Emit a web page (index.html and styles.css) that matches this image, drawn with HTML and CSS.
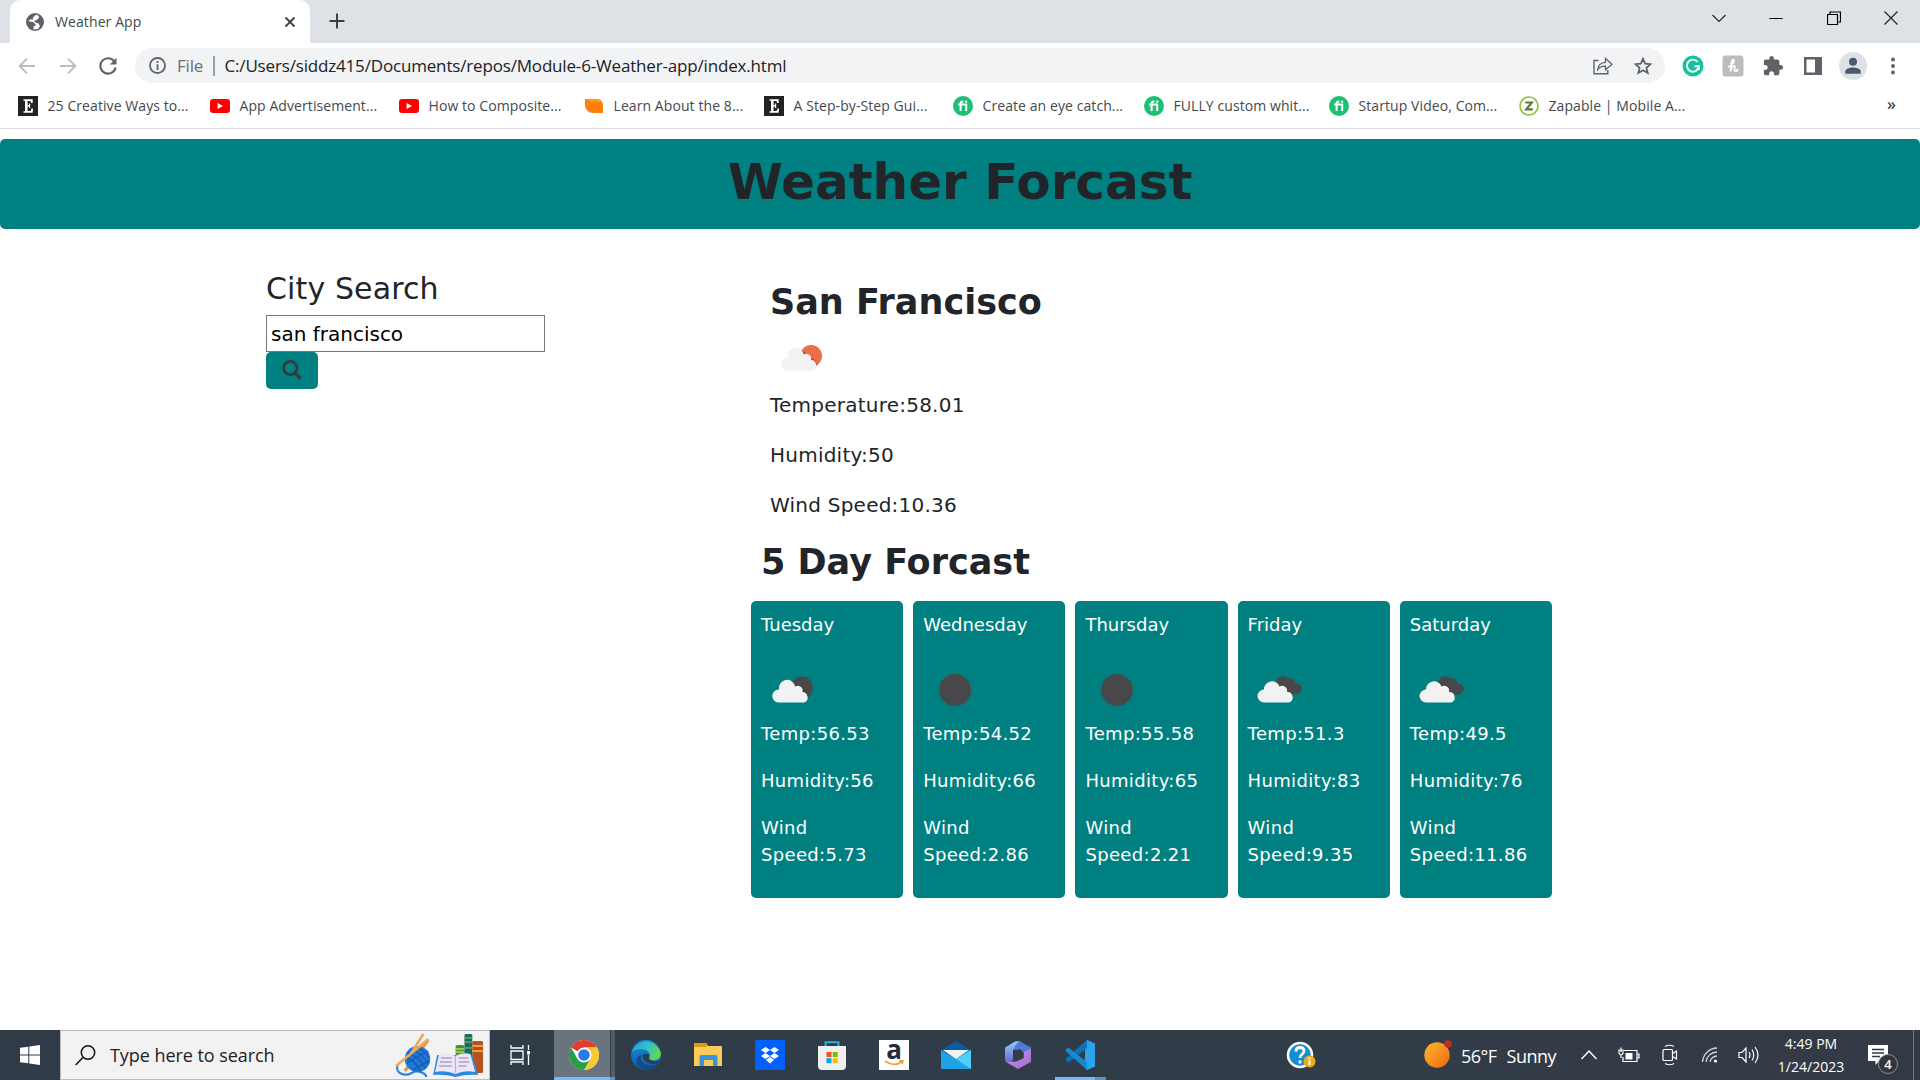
FILE: index.html
```html
<!DOCTYPE html>
<html lang="en">
<head>
<meta charset="utf-8">
<title>Weather App</title>
<link rel="stylesheet" href="styles.css">
</head>
<body>
<svg width="0" height="0" class="defs" aria-hidden="true">
  <defs>
    <linearGradient id="sunGrad" x1="0" y1="0" x2="1" y2="1"><stop offset="0" stop-color="#f9b934"/><stop offset="1" stop-color="#f4660c"/></linearGradient>
    <linearGradient id="edgeA" x1="0" y1="0" x2="1" y2="0.4"><stop offset="0" stop-color="#2a9fe0"/><stop offset="0.6" stop-color="#35c4c4"/><stop offset="1" stop-color="#62d84f"/></linearGradient>
    <linearGradient id="edgeB" x1="0" y1="0" x2="0" y2="1"><stop offset="0" stop-color="#1b8fdc"/><stop offset="1" stop-color="#0c57a6"/></linearGradient>
    <linearGradient id="m365a" x1="0" y1="0" x2="0" y2="1"><stop offset="0" stop-color="#8fd0f5"/><stop offset="1" stop-color="#6a5ad0"/></linearGradient>
    <linearGradient id="m365b" x1="0" y1="0" x2="1" y2="1"><stop offset="0" stop-color="#c69af0"/><stop offset="1" stop-color="#a068d0"/></linearGradient>
    <symbol id="ic-e" viewBox="0 0 20 20"><rect width="20" height="20" fill="#222"/><path d="M5.500 3.200H14.700V7H13.200L12.400 5H9.600V9.100H11V7.600H12.200V12.100H11V10.600H9.600V15H12.600L13.600 12.600H15L14.700 16.800H5.500V15.300H7V4.700H5.500Z" fill="#fff"/></symbol>
    <symbol id="ic-yt" viewBox="0 0 20 20"><rect y="3" width="20" height="14" rx="3" fill="#f00"/><path d="M7.600 7V13L13 10Z" fill="#fff"/></symbol>
    <symbol id="ic-leaf" viewBox="0 0 20 20"><path d="M1 3H12C17 3 19 6 19 10V17H9C4 17 1 13 1 9Z" fill="#ff7f0a"/><path d="M1 3H12C15 3 17 4 18 6L8 6Z" fill="#ff9a1c"/></symbol>
    <symbol id="ic-fi" viewBox="0 0 20 20"><circle cx="10" cy="10" r="10" fill="#1dbf73"/><path d="M7.600 15V7.400Q7.600 5.300 10.300 5.400M5.300 8.600H13.200V15" fill="none" stroke="#fff" stroke-width="2"/><circle cx="13.200" cy="5.600" r="1.200" fill="#fff"/></symbol>
    <symbol id="ic-z" viewBox="0 0 20 20"><circle cx="10" cy="10" r="9" fill="#fff" stroke="#8dc63f" stroke-width="1.700"/><path d="M6.200 6.500H12.800L7.200 13.400H13.800" fill="none" stroke="#5b7d3c" stroke-width="2.200"/></symbol>
    <symbol id="wx-sun" viewBox="0 0 62 62"><circle cx="41" cy="29" r="11" fill="#ec6e4c"/><path d="M31 24q6 0 7 6q7-1 9 8L30 42Z" fill="#d9492a"/><path d="M17 43.500A6.500 6.500 0 0 1 17.500 30.500A7.800 7.800 0 0 1 33.500 27.500A5 5 0 0 1 41 33A5.400 5.400 0 0 1 42.500 43.500Z" fill="#f2f2f2"/></symbol>
    <symbol id="wx-moon" viewBox="0 0 62 62"><circle cx="41" cy="28.500" r="11" fill="#48484a"/><path d="M32 25q6 0 7 6q7-1 9 7L30 42Z" fill="#2f3a3b"/><path d="M17.500 43.500A6.500 6.500 0 0 1 18 30.500A7.800 7.800 0 0 1 34 27.500A5 5 0 0 1 41.500 33A5.400 5.400 0 0 1 43 43.500Z" fill="#f2f2f2"/></symbol>
    <symbol id="wx-clear" viewBox="0 0 62 62"><circle cx="32" cy="31" r="16" fill="#48484a"/></symbol>
    <symbol id="wx-clouds" viewBox="0 0 62 62"><path d="M28 24A7 7 0 0 1 40 19.500A5.500 5.500 0 0 1 47.500 24.500A5.300 5.300 0 0 1 49 35.500H35Z" fill="#48484a"/><path d="M16 43.500A6.500 6.500 0 0 1 16 30.500A8 8 0 0 1 31.500 27.500A5 5 0 0 1 39 33A5.400 5.400 0 0 1 41 43.500Z" fill="#f2f2f2"/></symbol>
  </defs>
</svg>

<header class="tabstrip">
  <div class="tab">
    <svg class="globe" width="18" height="18" viewBox="0 0 18 18"><circle cx="9" cy="9" r="9" fill="#5f6368"/><path d="M10 1.800L7 4.500V6.500H4L2.200 8L7.500 9.300L9.500 11.200V12.500L7.500 13.600V16.500L12 16L14 13L12.500 10.500L9.500 9.500L8 8L10 7.200L12.500 5.500L13 3Z" fill="#fff"/></svg>
    <span class="tab-title">Weather App</span>
    <svg width="12" height="12" viewBox="0 0 12 12"><path d="M1.500 1.500L10.500 10.500M10.500 1.500L1.500 10.500" stroke="#3c4043" stroke-width="1.800"/></svg>
  </div>
  <svg class="plus" width="16" height="16" viewBox="0 0 16 16"><path d="M8 0.500V15.500M0.500 8H15.500" stroke="#3c4043" stroke-width="2"/></svg>
  <div class="window-buttons">
    <svg width="14" height="14" viewBox="0 0 14 14"><path d="M.5 4L7 10.500L13.500 4" fill="none" stroke="#222" stroke-width="1.100"/></svg>
    <svg width="14" height="14" viewBox="0 0 14 14"><path d="M.5 7.500H13.500" stroke="#000"/></svg>
    <svg width="14" height="14" viewBox="0 0 14 14"><path d="M.5 3.500H10.500V13.500H.5ZM3 3.500V1H13.500V11H10.500" fill="none" stroke="#000" stroke-width="1.200"/></svg>
    <svg width="14" height="14" viewBox="0 0 14 14"><path d="M.5 .5L13.500 13.500M13.500 .5L.5 13.500" stroke="#222" stroke-width="1.200"/></svg>
  </div>
</header>

<nav class="toolbar">
  <div class="nav-buttons">
    <svg width="18" height="18" viewBox="0 0 18 18"><path d="M17 9H2M9 1.700L1.700 9L9 16.300" fill="none" stroke="#babcbe" stroke-width="1.800"/></svg>
    <svg width="18" height="18" viewBox="0 0 18 18"><path d="M1 9H16M9 1.700L16.300 9L9 16.300" fill="none" stroke="#babcbe" stroke-width="1.800"/></svg>
    <svg width="18" height="18" viewBox="0 0 18 18"><path d="M15.600 4.800A7.700 7.700 0 1 0 16.600 10.500" fill="none" stroke="#5f6368" stroke-width="2.100"/><path d="M17.500 .8V7.500H10.800Z" fill="#5f6368"/></svg>
  </div>
  <div class="omnibox">
    <svg width="17" height="17" viewBox="0 0 17 17"><circle cx="8.500" cy="8.500" r="7.500" fill="none" stroke="#5f6368" stroke-width="1.800"/><path d="M8.500 7.300V13M8.500 4V5.900" stroke="#5f6368" stroke-width="1.800"/></svg>
    <span class="scheme">File</span>
    <span class="divider"></span>
    <span class="url">C:/Users/siddz415/Documents/repos/Module-6-Weather-app/index.html</span>
    <svg class="share" width="20" height="18" viewBox="0 0 20 18"><path d="M5.500 3.500H1V16.800H14.800V13" fill="none" stroke="#5f6368" stroke-width="1.400"/><path d="M4.800 12.500Q5.500 5.800 12.500 5.400V1.500L19 7.300L12.500 12.800V9.200Q7.500 9 4.800 12.500Z" fill="none" stroke="#5f6368" stroke-width="1.300"/></svg>
    <svg class="star" width="18" height="18" viewBox="0 0 18 18"><path d="M9 1.800L11.100 6.700L16.500 7.200L12.400 10.700L13.700 16L9 13.200L4.300 16L5.600 10.700L1.500 7.200L6.900 6.700Z" fill="none" stroke="#5f6368" stroke-width="1.800"/></svg>
  </div>
  <div class="extensions">
    <svg width="22" height="22" viewBox="0 0 22 22"><circle cx="11" cy="11" r="10.500" fill="#15c39a"/><path d="M15.600 6.900A6 6 0 1 0 16.900 11.200H12.500M16.800 11.300V15" fill="none" stroke="#fff" stroke-width="1.900"/></svg>
    <svg width="22" height="22" viewBox="0 0 22 22"><rect x=".5" y=".5" width="21" height="21" rx="3" fill="#bdbdbd"/><path d="M6 12C11 10 13 6 11.500 4.600C9.500 4 9 10 8.500 16.500C9 12 12 10 12.800 11.300C13 13 11.500 16 13.500 16.300C14.500 16.300 15.500 15 16 14" fill="none" stroke="#fff" stroke-width="1.800"/></svg>
    <svg width="22" height="22" viewBox="0 0 24 24"><path d="M20.500 11H19V7c0-1.100-.9-2-2-2h-4V3.500C13 2.120 11.880 1 10.500 1S8 2.120 8 3.500V5H4c-1.100 0-1.990.9-1.990 2v3.800H3.500c1.490 0 2.700 1.210 2.700 2.700s-1.210 2.700-2.700 2.700H2V20c0 1.100.9 2 2 2h3.800v-1.500c0-1.490 1.210-2.700 2.700-2.700 1.490 0 2.700 1.210 2.700 2.700V22H17c1.100 0 2-.9 2-2v-4h1.500c1.380 0 2.500-1.120 2.500-2.500S21.880 11 20.500 11z" fill="#5f6368"/></svg>
    <svg width="22" height="22" viewBox="0 0 22 22"><path d="M2 2H20V20H2ZM4.500 4.500V17.500H13V4.500Z" fill="#5f6368" fill-rule="evenodd"/></svg>
    <svg width="28" height="28" viewBox="0 0 28 28"><circle cx="14" cy="14" r="14" fill="#dee1e6"/><circle cx="14" cy="9.800" r="4" fill="#4a5970"/><path d="M6.300 21.700V19.500C6.300 16.700 11 15.500 14 15.500S21.700 16.700 21.700 19.500V21.700Z" fill="#4a5970"/></svg>
    <svg width="22" height="22" viewBox="0 0 22 22"><circle cx="11" cy="4.600" r="2" fill="#5f6368"/><circle cx="11" cy="11" r="2" fill="#5f6368"/><circle cx="11" cy="17.400" r="2" fill="#5f6368"/></svg>
  </div>
</nav>

<nav class="bookmarks">
  <a class="bookmark b1"><svg width="20" height="20"><use href="#ic-e"/></svg><span>25 Creative Ways to...</span></a>
  <a class="bookmark b2"><svg width="20" height="20"><use href="#ic-yt"/></svg><span>App Advertisement...</span></a>
  <a class="bookmark b3"><svg width="20" height="20"><use href="#ic-yt"/></svg><span>How to Composite...</span></a>
  <a class="bookmark b4"><svg width="20" height="20"><use href="#ic-leaf"/></svg><span>Learn About the 8...</span></a>
  <a class="bookmark b5"><svg width="20" height="20"><use href="#ic-e"/></svg><span>A Step-by-Step Gui...</span></a>
  <a class="bookmark b6"><svg width="20" height="20"><use href="#ic-fi"/></svg><span>Create an eye catch...</span></a>
  <a class="bookmark b7"><svg width="20" height="20"><use href="#ic-fi"/></svg><span>FULLY custom whit...</span></a>
  <a class="bookmark b8"><svg width="20" height="20"><use href="#ic-fi"/></svg><span>Startup Video, Com...</span></a>
  <a class="bookmark b9"><svg width="20" height="20"><use href="#ic-z"/></svg><span>Zapable | Mobile A...</span></a>
  <span class="more">»</span>
</nav>

<main class="page">
  <h1 class="banner">Weather Forcast</h1>
  <div class="content">
    <section class="search">
      <h2>City Search</h2>
      <input class="city" type="text" value="san francisco">
      <button class="go" type="button" aria-label="Search">
        <svg width="22" height="22" viewBox="0 0 22 22"><circle cx="9.300" cy="8" r="6.700" fill="none" stroke="#343a40" stroke-width="2.700"/><path d="M13.800 12.800L19.600 18.600" stroke="#343a40" stroke-width="3.200"/></svg>
      </button>
    </section>
    <section class="weather">
      <div class="today">
        <h2>San Francisco</h2>
        <svg class="wx" width="62" height="62"><use href="#wx-sun"/></svg>
        <p>Temperature:58.01</p>
        <p>Humidity:50</p>
        <p>Wind Speed:10.36</p>
      </div>
      <h2 class="five">5 Day Forcast</h2>
      <div class="cards">
        <article class="card"><h3>Tuesday</h3><svg class="wx" width="62" height="62"><use href="#wx-moon"/></svg><p>Temp:56.53</p><p>Humidity:56</p><p>Wind Speed:5.73</p></article>
        <article class="card"><h3>Wednesday</h3><svg class="wx" width="62" height="62"><use href="#wx-clear"/></svg><p>Temp:54.52</p><p>Humidity:66</p><p>Wind Speed:2.86</p></article>
        <article class="card"><h3>Thursday</h3><svg class="wx" width="62" height="62"><use href="#wx-clear"/></svg><p>Temp:55.58</p><p>Humidity:65</p><p>Wind Speed:2.21</p></article>
        <article class="card"><h3>Friday</h3><svg class="wx" width="62" height="62"><use href="#wx-clouds"/></svg><p>Temp:51.3</p><p>Humidity:83</p><p>Wind Speed:9.35</p></article>
        <article class="card"><h3>Saturday</h3><svg class="wx" width="62" height="62"><use href="#wx-clouds"/></svg><p>Temp:49.5</p><p>Humidity:76</p><p>Wind Speed:11.86</p></article>
      </div>
    </section>
  </div>
</main>

<footer class="taskbar">
  <div class="start"><svg width="20" height="20" viewBox="0 0 20 20"><path d="M0 2.800L8.300 1.700V9.500H0ZM9.300 1.500L20 0V9.500H9.300ZM0 10.500H8.300V18.300L0 17.200ZM9.300 10.500H20V20L9.300 18.500Z" fill="#fff"/></svg></div>
  <div class="searchbox">
    <svg width="21" height="21" viewBox="0 0 21 21"><circle cx="13" cy="7.500" r="6.700" fill="none" stroke="#111" stroke-width="1.500"/><path d="M8.200 12.300L.7 20" stroke="#111" stroke-width="1.500"/></svg>
    <span>Type here to search</span>
    <svg class="doodle" width="90" height="48" viewBox="0 0 92 48" preserveAspectRatio="none">
      <path d="M3 34C-1 42 10 46 17 42S32 43 32 46" fill="none" stroke="#2a86e0" stroke-width="2.200"/>
      <path d="M10 40L34 9" stroke="#e0954a" stroke-width="3"/>
      <circle cx="23" cy="28" r="13" fill="#1f78d8"/>
      <path d="M13 22Q24 25 31 37M16 18Q28 22 34 33M21 16Q30 19 35 27M11 27Q20 29 26 40M12 32L34 20M18 39L35 30" fill="none" stroke="#125ab0" stroke-width="1.300"/>
      <path d="M1 35L27 14L34 8M16 23L29 3" stroke="#eda85e" stroke-width="2.600"/>
      <rect x="62" y="14" width="9" height="19" rx="1.500" fill="#3f9444"/><path d="M62 18H71M62 21H71" stroke="#c8d14c" stroke-width="1.500"/>
      <rect x="71" y="3" width="8" height="31" rx="1.500" fill="#0a6f66"/><path d="M71 7H79M71 11H79M71 17H79" stroke="#c7b54b" stroke-width="1.200"/>
      <rect x="79" y="10" width="11" height="32" rx="1.500" fill="#b4531c"/><path d="M79 15H90M79 20H90" stroke="#e8a13c" stroke-width="1.800"/>
      <path d="M39 44L43 24H79L85 44Q73 43 62 46Q50 43 39 44Z" fill="#2c8be0"/>
      <path d="M41 41L45 23Q55 21 61.500 25Q69 21 77 23L82 41Q70 39 62 43Q52 39 41 41Z" fill="#ece6f8"/>
      <path d="M61.500 25L62 42" stroke="#b7a9d8" stroke-width="1.200"/><path d="M47 27H58M46 31H58M45 35H58M65 27H75M65 31H76M65 35H73" stroke="#aaa3c0" stroke-width="1.300"/>
    </svg>
  </div>
  <div class="taskview"><svg width="22" height="20" viewBox="0 0 22 20"><path d="M1 0V3H13V0M1 20V17H13V20M1 6H13V14.500H1ZM18.500 0V5M18.500 10V20" fill="none" stroke="#fff" stroke-width="1.300"/><rect x="17" y="6" width="3" height="3.500" fill="#fff"/></svg></div>
  <div class="apps">
    <div class="app active">
      <svg width="30" height="30" viewBox="0 0 30 30"><circle cx="15" cy="15" r="15" fill="#fff"/><path d="M15 15L2 7.500A15 15 0 0 1 28 7.500H15Z" fill="#e33b2e"/><path d="M28 7.500A15 15 0 0 1 15 30L21.500 18.800L15 7.500Z" fill="#fcc934"/><path d="M2 7.500A15 15 0 0 0 15 30L21.500 18.800H8.500Z" fill="#2a9c4a"/><circle cx="15" cy="15" r="7.500" fill="#fff"/><circle cx="15" cy="15" r="5.800" fill="#2b78e8"/></svg>
      <span class="edge-stack"></span>
    </div>
    <div class="app"><svg width="30" height="30" viewBox="0 0 30 30"><circle cx="15" cy="15" r="15" fill="url(#edgeB)"/><path d="M1 12A15 15 0 0 1 30 13.500C30 19 25 21 20.500 20C17 19 19 17.500 19 15C19 10 8 6 1 12Z" fill="url(#edgeA)"/><path d="M10 15C9 22 15 28 27 24C22 31 12 32 7 25C4 20 6 16 10 15Z" fill="#104b8c"/><path d="M12 14C10 21 18 25 27 23.500L28.500 21C24 22 19 21 17.500 18.500Q18.800 16.500 17 13.800Z" fill="#303d49"/></svg></div>
    <div class="app"><svg width="30" height="30" viewBox="0 0 30 30"><path d="M1 4Q1 3 2 3H13L15 6H28Q29 6 29 7V26H1Z" fill="#f8cc56"/><path d="M1 3H13L15 5L13 7H1Z" fill="#dc9a16"/><path d="M6.500 26V17Q6.500 15 8.500 15H22.500Q24.500 15 24.500 17V26H20V20H11V26Z" fill="#3d94d8"/></svg></div>
    <div class="app"><svg width="30" height="30" viewBox="0 0 30 30"><rect width="30" height="30" fill="#0061fe"/><path d="M10.500 7L15 10L10.500 13L6 10ZM19.500 7L24 10L19.500 13L15 10ZM10.500 13L15 16L10.500 19L6 16ZM19.500 13L24 16L19.500 19L15 16ZM15 17L19 20L15 23.500L11 20Z" fill="#fff"/></svg></div>
    <div class="app"><svg width="30" height="30" viewBox="0 0 30 30"><path d="M1 6H29V26Q29 30 25 30H5Q1 30 1 26Z" fill="#f0f0f0"/><path d="M8.500 6V2.200H21.500V6" fill="none" stroke="#2ab2ea" stroke-width="2"/><rect x="9.500" y="12" width="5" height="5" fill="#f25022"/><rect x="15.700" y="12" width="5" height="5" fill="#7fba00"/><rect x="9.500" y="18.200" width="5" height="5" fill="#00a4ef"/><rect x="15.700" y="18.200" width="5" height="5" fill="#ffb900"/></svg></div>
    <div class="app"><div class="amazon"><span>a</span><svg width="20" height="6" viewBox="0 0 20 6"><path d="M1 1Q10 7.500 18 1.500M15 .8H19L18 4" fill="none" stroke="#f3a13a" stroke-width="1.600"/></svg></div></div>
    <div class="app"><svg width="30" height="30" viewBox="0 0 30 30"><path d="M0 10L15 1L30 10V20H0Z" fill="#0c59a4"/><path d="M0 10L15 19L30 10V29H0Z" fill="#1fa2e6"/><path d="M15 19L30 10V29Z" fill="#4fd0f8"/><path d="M2 10H28L15 19Z" fill="#f3f3f3"/></svg></div>
    <div class="app"><svg width="30" height="30" viewBox="0 0 30 30"><path d="M12 1.500L2 7.500V21L8 24.500L10 19V10L20 3.500L16 1Z" fill="url(#m365a)"/><path d="M16 1L28 7.500V17L20 12.500L11 9.500L12 6Z" fill="#5178d8"/><path d="M28 9V22L15 29L3 22L13 21.500L20.500 18V12Z" fill="url(#m365b)"/><path d="M11 11L17 9L20.500 12.500V18L13 21.500L10 18.500Z" fill="#303d49"/></svg></div>
    <div class="app code"><svg width="30" height="30" viewBox="0 0 30 30"><path d="M22 0L30 3.500V26.500L22 30L20 28V2Z" fill="#2aa4ec"/><path d="M22 0V8L3.500 22.500L.5 20.500V19Z" fill="#0b72ba"/><path d="M22 30V22L3.500 7.500L.5 9.500V11Z" fill="#1488d2"/></svg><span class="running"></span></div>
  </div>
  <div class="tray">
    <svg class="help" width="30" height="34" viewBox="0 0 30 34"><circle cx="14" cy="17" r="12" fill="#128fd2" stroke="#fff" stroke-width="2.500"/><path d="M10 13.500Q10 9.500 14 9.500T18 13Q18 15 16 16.300T14 20" fill="none" stroke="#fff" stroke-width="2.800"/><circle cx="14" cy="24" r="1.700" fill="#fff"/><circle cx="23.500" cy="23.500" r="6" fill="#f0a81c"/><path d="M23.500 22.500V27M23.500 19.500V21.300" stroke="#fff" stroke-width="2"/></svg>
    <svg class="sun" width="30" height="34" viewBox="0 0 30 34"><circle cx="14" cy="17" r="12.700" fill="url(#sunGrad)"/><circle cx="25" cy="6" r="3.700" fill="#c42b1c"/></svg>
    <span class="weather-text"><span>56°F</span><span>Sunny</span></span>
    <svg class="chev" width="18" height="18" viewBox="0 0 18 18"><path d="M1.500 13L9 5L16.500 13" fill="none" stroke="#fff" stroke-width="1.400"/></svg>
    <svg class="bat" width="22" height="18" viewBox="0 0 22 18"><path d="M6 4.500H19V15.500H5V11M19 8H21V12H19M3 6V1.500M1 4V7Q1 8.500 3 8.500T5 7V4ZM3 8.500V12" fill="none" stroke="#fff" stroke-width="1.200"/><rect x="7.500" y="7" width="7" height="6.500" fill="#fff"/></svg>
    <svg class="cam" width="18" height="22" viewBox="0 0 18 22"><rect x="2" y="5.500" width="9.500" height="11" rx="1" fill="none" stroke="#fff" stroke-width="1.200"/><path d="M11.500 9.500L15.500 7V15L11.500 12.500M4 2.500Q8.500 0 13 2.500M4 19.500Q8.500 22 13 19.500" fill="none" stroke="#fff" stroke-width="1.200"/></svg>
    <svg class="wifi" width="18" height="18" viewBox="0 0 18 18"><path d="M1.500 16A15 15 0 0 1 16 2M5 16A11 11 0 0 1 16 6M9 16A7 7 0 0 1 16 10" fill="none" stroke="#d5d8dc" stroke-width="1.300"/><circle cx="14.500" cy="15" r="1.600" fill="#fff"/></svg>
    <svg class="vol" width="22" height="18" viewBox="0 0 22 18"><path d="M1 6.500H4L8 2V16L4 11.500H1ZM11 6Q13 9 11 12M14 3.500Q17.500 9 14 14.500M17 1Q23 9 17 17" fill="none" stroke="#fff" stroke-width="1.200"/></svg>
    <div class="clock"><span>4:49 PM</span><span>1/24/2023</span></div>
    <div class="notice"><svg width="20" height="20" viewBox="0 0 20 20"><path d="M0 0H20V16H11L7.500 20V16H0Z" fill="#fff"/><path d="M4 4.500H16M4 8H16M4 11.500H12" stroke="#303845" stroke-width="1.300"/></svg><span class="count">4</span></div>
    <span class="peek"></span>
  </div>
</footer>
</body>
</html>
```
FILE: styles.css
```css
* { box-sizing: border-box; }
html, body { margin: 0; height: 100%; }
body {
  display: flex; flex-direction: column; height: 1080px; overflow: hidden;
  background: #fff; color: #212529; font-family: "DejaVu Sans", Verdana, sans-serif;
}
svg { display: block; flex: none; }
.defs { position: absolute; }
.tabstrip, .toolbar, .bookmarks, .taskbar { font-family: "Open Sans", "Noto Sans", sans-serif; white-space: nowrap; }

/* Browser chrome */
.tabstrip { display: flex; align-items: center; height: 43px; flex: none; padding-left: 10px; background: #dee1e6; }
.tab { display: flex; align-items: center; width: 300px; height: 43px; padding: 0 14px 0 16px; background: #fff; border-radius: 10px 10px 0 0; }
.tab-title { flex: 1; margin-left: 11px; padding-bottom: 1px; font-size: 14px; letter-spacing: .1px; color: #45494d; }
.plus { margin-left: 19px; margin-bottom: 1px; }
.window-buttons { display: flex; gap: 43.5px; margin-left: auto; padding-right: 22px; margin-bottom: 7px; }

.toolbar { display: flex; align-items: center; height: 45px; flex: none; padding-left: 18px; }
.nav-buttons { display: flex; gap: 22.5px; width: 117px; }
.omnibox { display: flex; align-items: center; width: 1530px; height: 35px; padding: 0 13px 0 14px; background: #f1f3f4; border-radius: 18px; font-size: 17px; letter-spacing: -.17px; }
.scheme { width: 35px; margin-left: 11px; color: #6b6f74; }
.divider { width: 1.5px; height: 20px; margin-left: 1px; background: #9aa0a6; }
.url { margin-left: 10px; color: #202124; }
.share { margin-left: auto; margin-right: 21px; }
.extensions { display: flex; align-items: center; gap: 18px; margin-left: 17px; }
.extensions svg:nth-child(5) { margin: 0 -3px; }

.bookmarks { display: flex; align-items: center; height: 41px; flex: none; padding: 0 24px 5px 18px; border-bottom: 1px solid #d9dadc; font-size: 14px; letter-spacing: .08px; color: #45494d; }
.bookmark { display: flex; align-items: center; gap: 9.5px; flex: none; }
.b1 { width: 192px; } .b2 { width: 189px; } .b3 { width: 185px; } .b4 { width: 180px; }
.b5 { width: 189px; } .b6 { width: 191px; } .b7 { width: 185px; } .b8 { width: 190px; }
.more { margin-left: auto; padding-bottom: 3px; font-size: 16px; font-weight: 600; }

/* Weather page */
.page { flex: 1; padding-top: 10px; }
h1, h2, h3, p { margin: 0; }
.banner { height: 90px; background: #008080; border-radius: 5px; text-align: center; font-size: 50px; font-weight: 700; line-height: 60px; padding-top: 13px; }
.content { display: flex; padding-left: 266px; }
.search { width: 485px; padding-top: 42px; }
.search h2 { font-size: 30px; font-weight: 400; line-height: 36px; letter-spacing: .12px; margin-bottom: 8px; }
.city { display: block; width: 279px; height: 37px; border: 1px solid #767676; border-radius: 0; padding: 0 4px; font: 20px "DejaVu Sans", Verdana, sans-serif; color: #000; }
.go { display: flex; align-items: center; justify-content: center; width: 52px; height: 37px; padding: 0; border: 0; border-radius: 5px; background: #008080; }
.weather { width: 801px; }
.today { padding: 52px 0 0 19px; }
.today h2, .five { font-size: 35px; font-weight: 700; line-height: 42px; }
.today .wx { margin-top: 4px; margin-bottom: 1px; }
.today p { font-size: 20px; line-height: 30px; letter-spacing: .23px; margin-bottom: 20px; }
.five { padding: 1px 0 0 10px; margin-bottom: 18px; }
.cards { display: flex; gap: 10px; }
.card { flex: 1; height: 297px; padding: 10px; background: #008080; border-radius: 5px; color: #fff; font-size: 18px; line-height: 27px; }
.card h3 { font-size: 18px; font-weight: 400; }
.card .wx { margin-top: 21px; margin-bottom: -1px; }
.card p { margin-bottom: 20px; letter-spacing: .33px; }

/* Windows taskbar */
.taskbar { display: flex; align-items: stretch; height: 50px; flex: none; background: linear-gradient(90deg, #2f3c48, #303d49 60%, #343a45); color: #fff; }
.taskbar > div { flex: none; }
.start { display: flex; align-items: center; justify-content: center; width: 60px; }
.searchbox { display: flex; align-items: center; width: 430px; background: #f2f2f2; border: 1px solid #bdbdbd; padding: 0 4px 0 14px; color: #222; font-size: 18px; letter-spacing: -.06px; }
.searchbox span { margin-left: 14px; }
.doodle { margin-left: auto; }
.taskview { display: flex; align-items: center; padding-left: 20px; width: 63px; }
.apps { display: flex; }
.app { position: relative; display: flex; align-items: center; justify-content: center; width: 62px; }
.active { background: linear-gradient(#69747e, #69747e) 1px 0 / 56px 50px no-repeat; }
.active::after, .running { content: ""; position: absolute; left: 0; bottom: 0; width: 62px; height: 3px; background: linear-gradient(90deg, #7ab8ef 56px, #5f92c2 56px); }
.active::after { left: 1px; width: 61px; }
.edge-stack { position: absolute; left: 58px; top: 0; width: 4px; height: 50px; background: #535d67; }
.running { left: 6px; width: 51px; background: linear-gradient(90deg, #7ab8ef 40px, #5f92c2 40px); }
.amazon { display: flex; flex-direction: column; align-items: center; width: 30px; height: 30px; background: #fff; color: #222c3a; }
.amazon span { font-size: 26px; font-weight: 700; line-height: 18px; height: 20px; }
.tray { display: flex; align-items: center; margin-left: auto; width: 809px; padding-left: 175px; }
.help { margin-right: 107px; }
.weather-text { display: flex; gap: 10px; width: 118px; margin-left: 8px; margin-right: 1px; padding-top: 2px; font-size: 18px; letter-spacing: -.5px; }
.bat { margin-left: 20px; }
.cam { margin-left: 21px; }
.wifi { margin-left: 22px; }
.vol { margin-left: 19px; }
.clock { display: flex; flex-direction: column; align-items: center; width: 76px; margin-left: 13px; font-size: 14px; line-height: 23px; }
.notice { position: relative; margin-left: 19px; }
.count { position: absolute; left: 10px; top: 9px; width: 20px; height: 20px; border: 1px solid #8b9097; border-radius: 50%; background: #30363e; font-size: 13px; font-weight: 600; line-height: 18px; text-align: center; }
.peek { width: 1px; height: 50px; margin-left: 25px; background: #737982; }
```
